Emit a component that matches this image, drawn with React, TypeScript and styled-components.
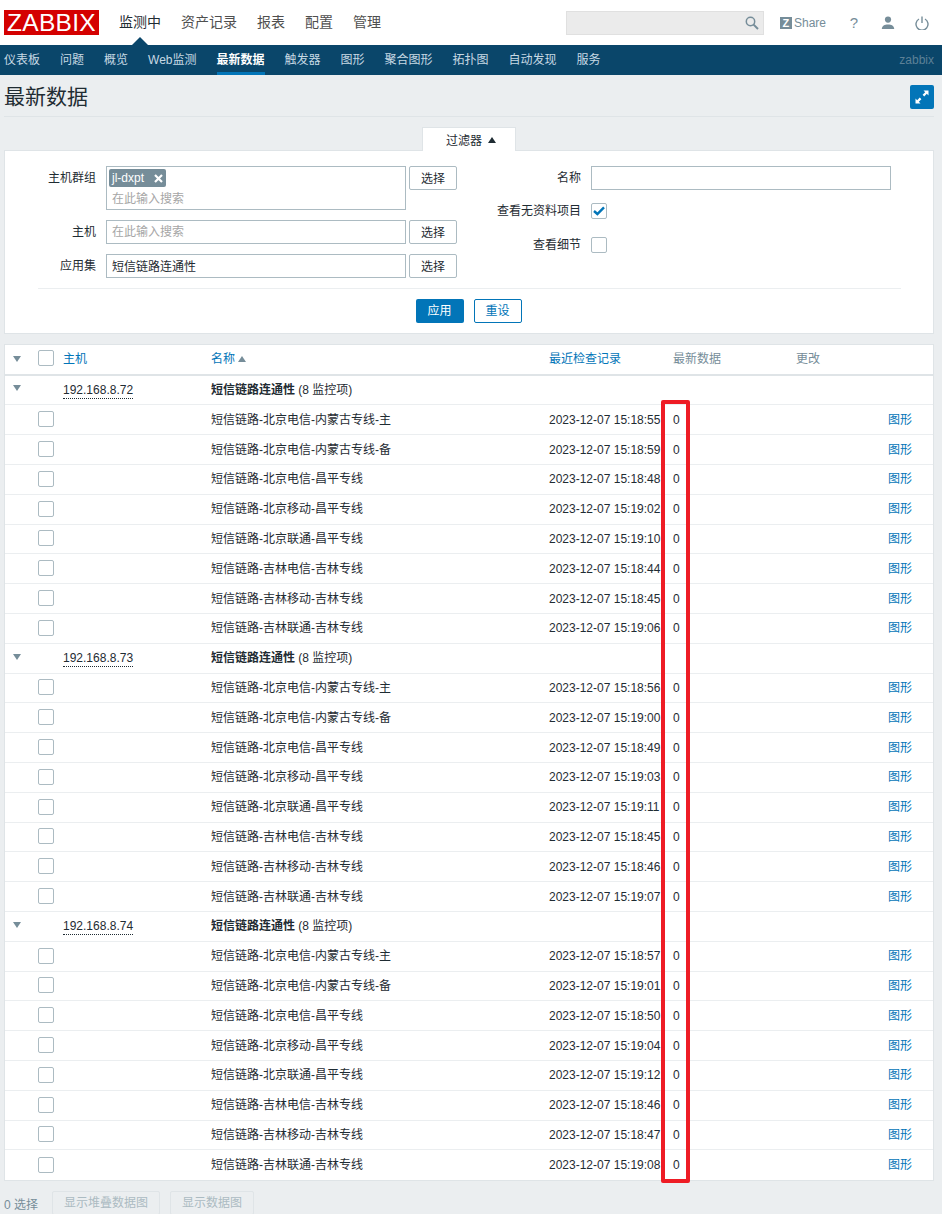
import React from "react";
import styled, { createGlobalStyle } from "styled-components";

const primaryNav = ["监测中", "资产记录", "报表", "配置", "管理"];
const secondaryNav = ["仪表板", "问题", "概览", "Web监测", "最新数据", "触发器", "图形", "聚合图形", "拓扑图", "自动发现", "服务"];
const itemNames = [
  "北京电信-内蒙古专线-主",
  "北京电信-内蒙古专线-备",
  "北京电信-昌平专线",
  "北京移动-昌平专线",
  "北京联通-昌平专线",
  "吉林电信-吉林专线",
  "吉林移动-吉林专线",
  "吉林联通-吉林专线",
];
const hosts = [
  { ip: "192.168.8.72", times: ["15:18:55", "15:18:59", "15:18:48", "15:19:02", "15:19:10", "15:18:44", "15:18:45", "15:19:06"] },
  { ip: "192.168.8.73", times: ["15:18:56", "15:19:00", "15:18:49", "15:19:03", "15:19:11", "15:18:45", "15:18:46", "15:19:07"] },
  { ip: "192.168.8.74", times: ["15:18:57", "15:19:01", "15:18:50", "15:19:04", "15:19:12", "15:18:46", "15:18:47", "15:19:08"] },
];

function App() {
  return (
    <Page>
      <GlobalStyle />
      <TopBar>
        <Logo>ZABBIX</Logo>
        <PrimaryNav>
          {primaryNav.map((item, i) => (
            <PrimaryItem key={item} $active={i === 0}>
              {item}
            </PrimaryItem>
          ))}
        </PrimaryNav>
        <TopTools>
          <SearchBox>
            <svg width="14" height="14" viewBox="0 0 14 14" fill="none" stroke="#768d99" strokeWidth="1.5">
              <circle cx="5.5" cy="5.5" r="4.2" />
              <path d="M8.6 8.6 L13 13" strokeWidth="2" />
            </svg>
          </SearchBox>
          <ShareLink>
            <ZBadge>Z</ZBadge>
            Share
          </ShareLink>
          <HelpIcon>?</HelpIcon>
          <ToolIcon>
            <svg width="14" height="14" viewBox="0 0 14 14" fill="#768d99">
              <circle cx="7" cy="3.6" r="3.1" />
              <path d="M0.8 13 C0.8 9.6 3.6 8.4 7 8.4 C10.4 8.4 13.2 9.6 13.2 13 Z" />
            </svg>
          </ToolIcon>
          <ToolIcon>
            <svg width="14" height="14" viewBox="0 0 14 14" fill="none" stroke="#768d99" strokeWidth="1.4">
              <path d="M4 3 A6 6 0 1 0 10 3" />
              <path d="M7 0.5 V7" />
            </svg>
          </ToolIcon>
        </TopTools>
      </TopBar>

      <SecondaryBar>
        {secondaryNav.map((item) => (
          <SecondaryItem key={item} $active={item === "最新数据"}>
            {item}
          </SecondaryItem>
        ))}
        <ServerName>zabbix</ServerName>
      </SecondaryBar>

      <Content>
        <TitleRow>
          <Title>最新数据</Title>
          <ExpandButton>
            <svg width="16" height="16" viewBox="0 0 16 16" fill="#fff">
              <path d="M9.5 1.5 H14.5 V6.5 L12.8 4.8 L10.2 7.4 L8.6 5.8 L11.2 3.2 Z" />
              <path d="M6.5 14.5 H1.5 V9.5 L3.2 11.2 L5.8 8.6 L7.4 10.2 L4.8 12.8 Z" />
            </svg>
          </ExpandButton>
        </TitleRow>

        <TabRow>
          <FilterTab>
            过滤器 <TabArrow />
          </FilterTab>
        </TabRow>

        <FilterBox>
          <FilterColumns>
            <FilterColumn $width={452}>
              <FieldRow>
                <FieldLabel $width={91}>主机群组</FieldLabel>
                <MultiField>
                  <Tag>
                    jl-dxpt
                    <svg width="9" height="9" viewBox="0 0 9 9" stroke="#fff" strokeWidth="2.2">
                      <path d="M1 1 L8 8 M8 1 L1 8" />
                    </svg>
                  </Tag>
                  <Hint>在此输入搜索</Hint>
                </MultiField>
                <SelectButton>选择</SelectButton>
              </FieldRow>
              <FieldRow>
                <FieldLabel $width={91}>主机</FieldLabel>
                <TextField>
                  <Hint>在此输入搜索</Hint>
                </TextField>
                <SelectButton>选择</SelectButton>
              </FieldRow>
              <FieldRow>
                <FieldLabel $width={91}>应用集</FieldLabel>
                <TextField>短信链路连通性</TextField>
                <SelectButton>选择</SelectButton>
              </FieldRow>
            </FilterColumn>
            <RightColumn>
              <FieldRow>
                <FieldLabel $width={100}>名称</FieldLabel>
                <TextField />
              </FieldRow>
              <FieldRow>
                <FieldLabel $width={100}>查看无资料项目</FieldLabel>
                <CheckBox>
                  <svg width="12" height="10" viewBox="0 0 12 10" fill="none" stroke="#0275b8" strokeWidth="2.4">
                    <path d="M1 5 L4.4 8 L11 1.4" />
                  </svg>
                </CheckBox>
              </FieldRow>
              <FieldRow>
                <FieldLabel $width={100}>查看细节</FieldLabel>
                <CheckBox />
              </FieldRow>
            </RightColumn>
          </FilterColumns>
          <FilterActions>
            <ApplyButton>应用</ApplyButton>
            <ResetButton>重设</ResetButton>
          </FilterActions>
        </FilterBox>

        <DataTable>
          <HeaderRow>
            <ArrowCell $head>
              <DownArrow />
            </ArrowCell>
            <CheckCell $head>
              <CheckBox />
            </CheckCell>
            <SortLink>主机</SortLink>
            <SortLink>
              名称 <UpArrow />
            </SortLink>
            <SortLink>最近检查记录</SortLink>
            <MutedHead>最新数据</MutedHead>
            <MutedHead>更改</MutedHead>
            <span />
          </HeaderRow>
          {hosts.map((host) => (
            <React.Fragment key={host.ip}>
              <DataRow>
                <ArrowCell>
                  <DownArrow />
                </ArrowCell>
                <span />
                <span>
                  <HostLink>{host.ip}</HostLink>
                </span>
                <GroupName>
                  <b>短信链路连通性</b> (8 监控项)
                </GroupName>
              </DataRow>
              {itemNames.map((name, i) => (
                <DataRow key={name}>
                  <span />
                  <CheckCell>
                    <CheckBox />
                  </CheckCell>
                  <span />
                  <span>短信链路-{name}</span>
                  <TimeCell>2023-12-07 {host.times[i]}</TimeCell>
                  <span>0</span>
                  <span />
                  <GraphLink>图形</GraphLink>
                </DataRow>
              ))}
            </React.Fragment>
          ))}
        </DataTable>

        <ActionBar>
          <SelectedCount>0 选择</SelectedCount>
          <DisabledButton>显示堆叠数据图</DisabledButton>
          <DisabledButton>显示数据图</DisabledButton>
        </ActionBar>
      </Content>

      <Highlight />
    </Page>
  );
}

export default App;

const GlobalStyle = createGlobalStyle`
  html, body {
    margin: 0;
    height: 1214px;
    overflow: hidden;
    background: #ebeef0;
  }
  body {
    font-family: "Liberation Sans", "Noto Sans CJK SC", sans-serif;
    font-size: 12px;
    color: #1f2c33;
  }
`;

const Page = styled.div`
  position: relative;
  width: 942px;
  height: 1214px;
  overflow: hidden;
`;

const TopBar = styled.div`
  height: 45px;
  background: #fff;
  display: flex;
  align-items: center;
  padding: 0 13px 0 4px;
  box-sizing: border-box;
`;

const Logo = styled.div`
  width: 95px;
  height: 25px;
  background: #d40000;
  color: #fff;
  font-size: 24.5px;
  line-height: 25px;
  text-align: center;
  letter-spacing: 0.3px;
`;

const PrimaryNav = styled.div`
  display: flex;
  gap: 20px;
  margin-left: 20px;
`;

const PrimaryItem = styled.div<{ $active?: boolean }>`
  position: relative;
  font-size: 14px;
  line-height: 45px;
  color: ${(p) => (p.$active ? "#1f2c33" : "#4f4f4f")};
  ${(p) =>
    p.$active &&
    `
    &::after {
      content: "";
      position: absolute;
      left: 13px;
      bottom: 0;
      border-left: 8px solid transparent;
      border-right: 8px solid transparent;
      border-bottom: 8px solid #0a466a;
    }
  `}
`;

const TopTools = styled.div`
  margin-left: auto;
  display: flex;
  align-items: center;
`;

const SearchBox = styled.div`
  width: 198px;
  height: 24px;
  box-sizing: border-box;
  background: #ebebeb;
  border: 1px solid #e0e0e0;
  display: flex;
  align-items: center;
  justify-content: flex-end;
  padding-right: 4px;
`;

const ShareLink = styled.div`
  display: flex;
  align-items: center;
  gap: 2px;
  margin-left: 16px;
  width: 46px;
  color: #768d99;
  font-size: 12px;
`;

const ZBadge = styled.span`
  width: 12px;
  height: 12px;
  background: #768d99;
  color: #fff;
  font-size: 11px;
  font-weight: bold;
  line-height: 12px;
  text-align: center;
`;

const HelpIcon = styled.div`
  width: 14px;
  margin-left: 21px;
  color: #768d99;
  font-size: 15px;
  text-align: center;
`;

const ToolIcon = styled.div`
  display: flex;
  margin-left: 20px;
`;

const SecondaryBar = styled.div`
  height: 30px;
  background: #0a466a;
  display: flex;
  align-items: stretch;
  gap: 20px;
  padding: 0 8px 0 4px;
`;

const SecondaryItem = styled.div<{ $active?: boolean }>`
  line-height: 30px;
  box-sizing: border-box;
  color: ${(p) => (p.$active ? "#fff" : "#c7d9e4")};
  font-weight: ${(p) => (p.$active ? "bold" : "normal")};
  border-bottom: 3px solid ${(p) => (p.$active ? "#0275b8" : "transparent")};
`;

const ServerName = styled.div`
  margin-left: auto;
  line-height: 30px;
  color: #5d8197;
`;

const Content = styled.div`
  padding: 0 8px 0 4px;
`;

const TitleRow = styled.div`
  height: 41px;
  border-bottom: 1px solid #dfe4e7;
  display: flex;
  align-items: center;
  justify-content: space-between;
`;

const Title = styled.h1`
  margin: 2px 0 0;
  font-size: 21px;
  font-weight: normal;
  line-height: 44px;
`;

const ExpandButton = styled.div`
  width: 24px;
  height: 24px;
  margin-top: 2px;
  background: #0275b8;
  border-radius: 2px;
  display: flex;
  align-items: center;
  justify-content: center;
`;

const TabRow = styled.div`
  display: flex;
  justify-content: center;
  margin-top: 10px;
  margin-bottom: -1px;
  position: relative;
`;

const FilterTab = styled.div`
  height: 24px;
  box-sizing: border-box;
  padding: 0 19px 0 23px;
  background: #fff;
  border: 1px solid #dfe4e7;
  border-bottom: none;
  display: flex;
  align-items: center;
  gap: 6px;
`;

const TabArrow = styled.span`
  border-left: 4px solid transparent;
  border-right: 4px solid transparent;
  border-bottom: 6px solid #1f2c33;
`;

const FilterBox = styled.div`
  height: 184px;
  box-sizing: border-box;
  background: #fff;
  border: 1px solid #dfe4e7;
  padding-top: 15px;
`;

const FilterColumns = styled.div`
  display: flex;
  gap: 24px;
  height: 122px;
`;

const FilterColumn = styled.div<{ $width: number }>`
  width: ${(p) => p.$width}px;
  display: flex;
  flex-direction: column;
  gap: 10px;
`;

const RightColumn = styled.div`
  display: flex;
  flex-direction: column;
  gap: 9px;
  & > :last-child {
    margin-top: 1px;
  }
`;

const FieldRow = styled.div`
  display: flex;
  align-items: flex-start;
  min-height: 24px;
`;

const FieldLabel = styled.div<{ $width: number }>`
  width: ${(p) => p.$width}px;
  margin-right: 10px;
  flex: none;
  text-align: right;
  line-height: 24px;
  white-space: nowrap;
`;

const TextField = styled.div`
  width: 300px;
  height: 24px;
  box-sizing: border-box;
  border: 1px solid #acbbc2;
  padding: 0 5px;
  line-height: 24px;
  background: #fff;
`;

const MultiField = styled.div`
  width: 300px;
  height: 44px;
  box-sizing: border-box;
  border: 1px solid #acbbc2;
  padding: 2px 5px 0 2px;
`;

const Tag = styled.div`
  width: 57px;
  height: 18px;
  box-sizing: border-box;
  padding: 0 3px;
  background: #768d99;
  border-radius: 2px;
  color: #fff;
  line-height: 18px;
  display: flex;
  align-items: center;
  justify-content: space-between;
`;

const Hint = styled.div`
  padding-left: 3px;
  color: #a6a6a6;
  line-height: 24px;
  ${TextField} > & {
    padding-left: 0;
    line-height: 22px;
  }
`;

const SelectButton = styled.div`
  width: 48px;
  height: 24px;
  box-sizing: border-box;
  margin-left: 3px;
  border: 1px solid #acbbc2;
  border-radius: 2px;
  text-align: center;
  line-height: 24px;
`;

const CheckBox = styled.div`
  width: 16px;
  height: 16px;
  box-sizing: border-box;
  margin-top: 4px;
  background: #fff;
  border: 1px solid #acbbc2;
  border-radius: 2px;
  display: flex;
  align-items: center;
  justify-content: center;
`;

const FilterActions = styled.div`
  margin: 0 32px 0 33px;
  height: 35px;
  box-sizing: border-box;
  padding-right: 2px;
  border-top: 1px solid #ebeef0;
  display: flex;
  justify-content: center;
  align-items: flex-end;
  gap: 10px;
`;

const ApplyButton = styled.div`
  width: 48px;
  height: 24px;
  background: #0275b8;
  border-radius: 2px;
  color: #fff;
  text-align: center;
  line-height: 24px;
`;

const ResetButton = styled.div`
  width: 48px;
  height: 24px;
  box-sizing: border-box;
  border: 1px solid #0275b8;
  border-radius: 2px;
  color: #0275b8;
  text-align: center;
  line-height: 22px;
`;

const DataTable = styled.div`
  margin-top: 10px;
  background: #fff;
  border: 1px solid #dfe4e7;
`;

const rowColumns = "33px 25px 148px 338px 124px 123px 92px 1fr";

const HeaderRow = styled.div`
  display: grid;
  grid-template-columns: ${rowColumns};
  align-items: center;
  height: 30.6px;
  box-sizing: border-box;
  line-height: 14px;
  border-bottom: 2px solid #dfe4e7;
`;

const DataRow = styled.div`
  display: grid;
  grid-template-columns: ${rowColumns};
  align-items: center;
  height: 29.8px;
  box-sizing: border-box;
  line-height: 14px;
  border-bottom: 1px solid #ebeef0;
  &:last-child {
    border-bottom: none;
  }
`;

const ArrowCell = styled.span<{ $head?: boolean }>`
  display: flex;
  padding-left: 8px;
  margin-top: ${(p) => (p.$head ? "2px" : "0")};
`;

const CheckCell = styled.span<{ $head?: boolean }>`
  display: flex;
  margin-top: ${(p) => (p.$head ? "-7px" : "-5px")};
`;

const DownArrow = styled.span`
  margin-top: -3px;
  border-left: 4px solid transparent;
  border-right: 4px solid transparent;
  border-top: 6px solid #768d99;
`;

const UpArrow = styled.span`
  display: inline-block;
  vertical-align: 1px;
  border-left: 4px solid transparent;
  border-right: 4px solid transparent;
  border-bottom: 6px solid #768d99;
`;

const SortLink = styled.span`
  color: #0275b8;
`;

const MutedHead = styled.span`
  color: #768d99;
`;

const HostLink = styled.span`
  border-bottom: 1px dotted #1f2c33;
  padding-bottom: 1px;
`;

const GroupName = styled.span`
  grid-column: span 4;
`;

const TimeCell = styled.span`
  white-space: nowrap;
`;

const GraphLink = styled.span`
  color: #0275b8;
`;

const ActionBar = styled.div`
  margin-top: 10px;
  display: flex;
  align-items: center;
  gap: 10px;
`;

const SelectedCount = styled.span`
  width: 38px;
  color: #768d99;
`;

const DisabledButton = styled.div`
  height: 24px;
  box-sizing: border-box;
  padding: 0 11px;
  border: 1px solid #dfe4e7;
  border-radius: 2px;
  color: #acbbc2;
  line-height: 22px;
`;

const Highlight = styled.div`
  position: absolute;
  left: 661px;
  top: 400px;
  width: 29px;
  height: 783px;
  box-sizing: border-box;
  border: 4px solid #ee1c25;
  border-radius: 2px;
`;
